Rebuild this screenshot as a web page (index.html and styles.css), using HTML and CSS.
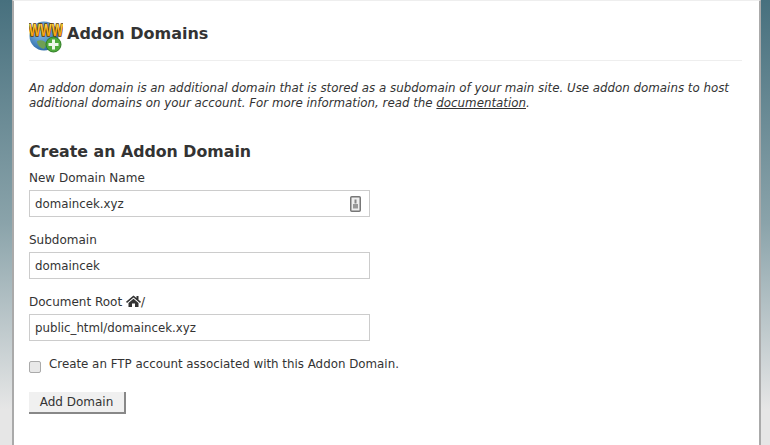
FILE: index.html
```html
<!DOCTYPE html>
<html lang="en">
<head>
    <meta charset="UTF-8">
    <title>Addon Domains</title>
    <link rel="stylesheet" href="styles.css">
</head>
<body>
    <div class="panel">
        <div class="page-header">
            <svg class="page-icon" width="34" height="34" viewBox="0 0 34 34">
                <defs>
                    <linearGradient id="www" x1="0" y1="0" x2="0" y2="1">
                        <stop offset="0" stop-color="#ffe14a"/>
                        <stop offset="1" stop-color="#f39200"/>
                    </linearGradient>
                    <radialGradient id="globe" cx="0.4" cy="0.35" r="0.75">
                        <stop offset="0" stop-color="#8cc4ee"/>
                        <stop offset="1" stop-color="#1f5f9f"/>
                    </radialGradient>
                </defs>
                <circle cx="15" cy="17" r="14.500" fill="url(#globe)"/>
                <path d="M8 22c4-2 8 0 10 3l-3 5c-4-1-7-4-7-8z" fill="#6f9f55"/>
                <text class="www-text" transform="translate(0 16.500) scale(1 1.300)" fill="url(#www)" stroke="#5a3500" stroke-width="1.200">WWW</text>
                <circle cx="24.500" cy="25.500" r="7.500" fill="#4ea93b" stroke="#2f7d25"/>
                <path d="M24.500 20.500v10M19.500 25.500h10" stroke="#eef6ea" stroke-width="3"/>
            </svg>
            <h1>Addon Domains</h1>
        </div>
        <p class="intro">An addon domain is an additional domain that is stored as a subdomain of your main site. Use addon domains to host additional domains on your account. For more information, read the <a href="#">documentation</a>.</p>
        <h2>Create an Addon Domain</h2>
        <form>
            <div class="form-group">
                <label for="domain">New Domain Name</label>
                <div class="input-wrap">
                    <input type="text" id="domain" value="domaincek.xyz">
                    <svg class="field-icon" width="11" height="16" viewBox="0 0 11 16">
                        <rect x="0.750" y="0.750" width="9.500" height="14.500" rx="1" fill="#eee" stroke="#777" stroke-width="1.500"/>
                        <path d="M5.500 3.500v4" stroke="#888" stroke-width="2"/>
                        <rect x="3" y="8" width="5" height="4.500" fill="#999"/>
                    </svg>
                </div>
            </div>
            <div class="form-group">
                <label for="subdomain">Subdomain</label>
                <input type="text" id="subdomain" value="domaincek">
            </div>
            <div class="form-group">
                <label for="docroot">Document Root
                    <svg class="home-icon" width="15" height="12" viewBox="0 0 15 12">
                        <path d="M7.500 0.500L0 6.800l1 1.100L7.500 2.600 14 7.900l1-1.100-2.500-2.100V1h-2v2L7.500.5z" fill="#333"/>
                        <path d="M2.500 8L7.500 3.800 12.500 8v4H9V8.500H6V12H2.500z" fill="#333"/>
                    </svg>/</label>
                <input type="text" id="docroot" value="public_html/domaincek.xyz">
            </div>
            <div class="check-row">
                <span class="fake-check"></span>
                <span class="check-text">Create an FTP account associated with this Addon Domain.</span>
            </div>
            <button type="button" class="add-btn">Add Domain</button>
        </form>
    </div>
</body>
</html>
```

FILE: styles.css
```css
body {
    margin: 0;
    padding: 0 9px 0 12px;
    height: 445px;
    box-sizing: border-box;
    overflow: hidden;
    font-family: "DejaVu Sans", Verdana, sans-serif;
    font-size: 12px;
    color: #333;
    background: linear-gradient(#47707e, #8aa3aa 50%, #e6e6e6 92%);
}
.panel {
    height: 100%;
    box-sizing: border-box;
    background: #fff;
    border-left: 2px solid #aaa;
    border-right: 2px solid #aaa;
    border-top: 1px solid #eee;
    padding: 0 17px 0 15px;
}
.page-header {
    display: flex;
    align-items: center;
    gap: 4px;
    height: 59px;
    border-bottom: 1px solid #eee;
}
.page-icon {
    margin-top: 10px;
}
.www-text {
    font-family: "Liberation Sans", sans-serif;
    font-weight: bold;
    font-size: 12px;
    paint-order: stroke;
}
h1 {
    margin: 5px 0 0;
    font-size: 16px;
    font-weight: bold;
    color: #333;
}
.intro {
    margin: 20px 0 0;
    font-style: italic;
    line-height: 15px;
    font-size: 11.83px;
}
.intro a {
    color: #333;
}
h2 {
    margin: 29px 0 0;
    font-size: 15.8px;
    line-height: 24px;
    color: #333;
}
.form-group {
    margin-top: 6px;
    margin-bottom: 15px;
}
.form-group label {
    display: block;
    line-height: 17px;
    margin-bottom: 3px;
}
.input-wrap {
    position: relative;
    width: 341px;
}
input[type="text"] {
    display: block;
    width: 341px;
    height: 27px;
    box-sizing: border-box;
    border: 1px solid #ccc;
    padding: 0 5px;
    font-family: "DejaVu Sans", Verdana, sans-serif;
    font-size: 11.8px;
    color: #333;
}
.field-icon {
    position: absolute;
    right: 9px;
    top: 6px;
}
.home-icon {
    vertical-align: -1px;
}
.check-row {
    display: flex;
    align-items: flex-start;
    gap: 8px;
    margin-top: 16px;
}
.check-text {
    font-size: 11.85px;
    line-height: 15px;
}
.fake-check {
    width: 10px;
    height: 10px;
    margin-top: 4px;
    border: 1px solid #aaa;
    border-radius: 2px;
    background: #e8e8e8;
}
.add-btn {
    display: block;
    margin-top: 19px;
    width: 97px;
    height: 22px;
    padding: 0;
    border: none;
    border-right: 2px solid #888;
    border-bottom: 2px solid #888;
    background: #f0f0f0;
    font-family: "DejaVu Sans", Verdana, sans-serif;
    font-size: 12px;
    color: #333;
}
```
